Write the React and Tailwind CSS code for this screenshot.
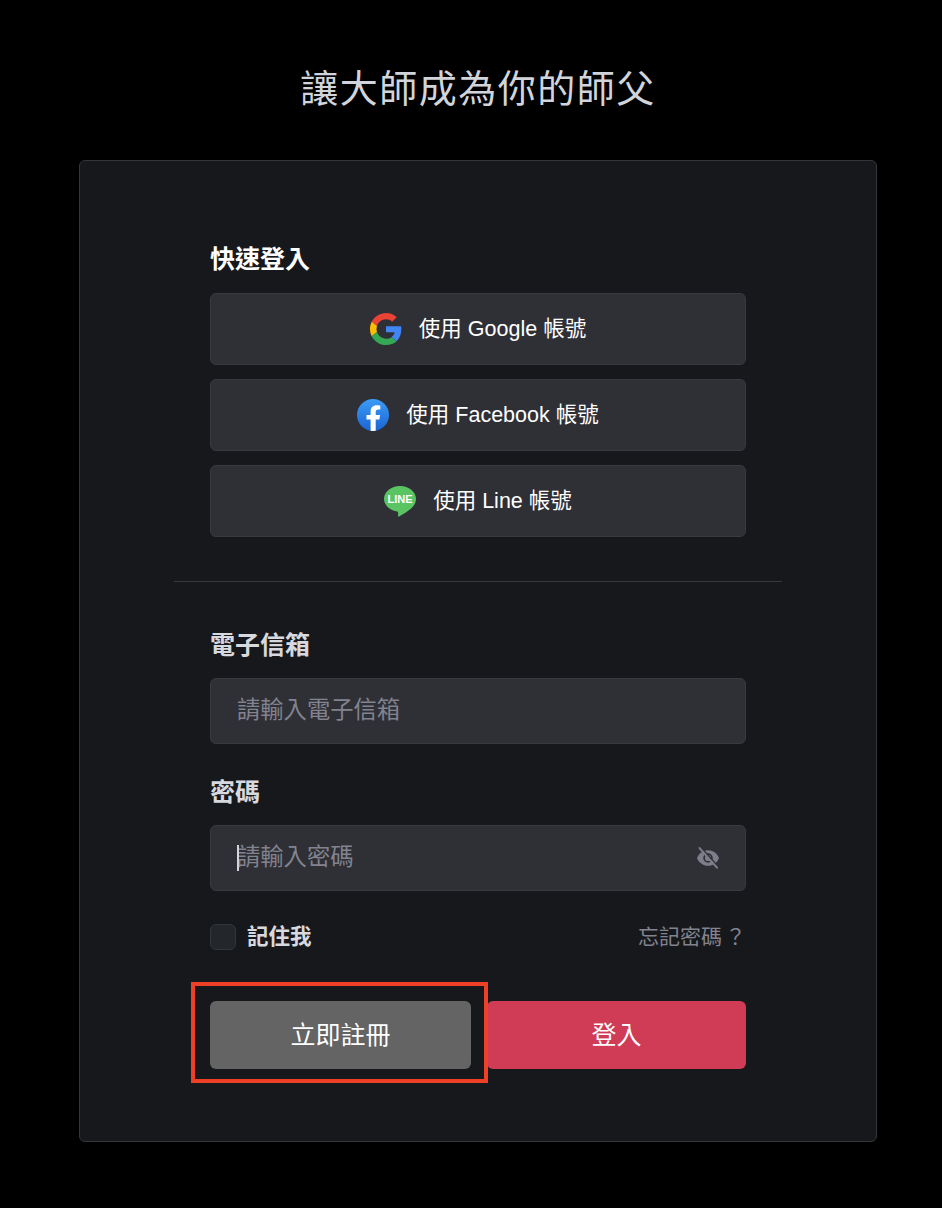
import React from 'react';

const GoogleIcon = () => (
  <svg viewBox="0 0 48 48" className="w-[32px] h-[32px] shrink-0">
    <path fill="#EA4335" d="M24 9.500c3.540 0 6.710 1.220 9.210 3.600l6.850-6.850C35.900 2.380 30.470 0 24 0 14.620 0 6.510 5.380 2.560 13.220l7.980 6.190C12.430 13.720 17.740 9.500 24 9.500z" />
    <path fill="#4285F4" d="M46.980 24.550c0-1.570-.15-3.090-.38-4.550H24v9.020h12.940c-.58 2.960-2.260 5.480-4.780 7.180l7.730 6c4.510-4.180 7.090-10.360 7.090-17.650z" />
    <path fill="#FBBC05" d="M10.530 28.590c-.48-1.450-.76-2.990-.76-4.590s.27-3.140.76-4.590l-7.980-6.190C.92 16.460 0 20.120 0 24c0 3.880.92 7.540 2.560 10.780l7.970-6.190z" />
    <path fill="#34A853" d="M24 48c6.480 0 11.930-2.130 15.890-5.810l-7.730-6c-2.150 1.450-4.920 2.300-8.160 2.300-6.260 0-11.570-4.220-13.470-9.910l-7.980 6.190C6.510 42.620 14.620 48 24 48z" />
  </svg>
);

const FacebookIcon = () => (
  <svg viewBox="0 0 32 32" className="w-[32px] h-[32px] shrink-0">
    <defs>
      <linearGradient id="fbGrad" x1="0" y1="0" x2="0" y2="1">
        <stop offset="0" stopColor="#3b9cf5" />
        <stop offset="1" stopColor="#1c64d4" />
      </linearGradient>
      <clipPath id="fbClip">
        <circle cx="16" cy="16" r="16" />
      </clipPath>
    </defs>
    <circle cx="16" cy="16" r="16" fill="url(#fbGrad)" />
    <path clipPath="url(#fbClip)" fill="#fff" d="M13.600 32V20.600H9.500V16h4.100v-3.500c0-4 2.400-6.300 6.100-6.300 1.800 0 3.600.3 3.600.3v3.900h-2c-2 0-2.600 1.200-2.600 2.500v3.100h4.400l-.7 4.600h-3.700V32z" />
  </svg>
);

const LineIcon = () => (
  <svg viewBox="0 0 32 32" className="w-[32px] h-[32px] shrink-0">
    <path fill="#5ac463" d="M16 1C7.200 1 0 6.700 0 13.800c0 6.300 5.600 11.600 13.300 12.600.7.2.9 1 .9 1.700l-.2 3c0 .6.5.8 1 .5 3.500-2 9.500-5.600 12.600-8.600C30.400 20.400 32 17.300 32 13.800 32 6.700 24.800 1 16 1z" />
    <text x="16" y="18.200" textAnchor="middle" fill="#fff" fontSize="11" fontWeight="700" fontFamily="Liberation Sans, sans-serif">LINE</text>
  </svg>
);

const EyeOffIcon = () => (
  <svg viewBox="0 0 24 24" className="w-[22px] h-[22px]">
    <path fill="#7d7e8a" d="M12 3.500C6.500 3.500 1.800 7 0 12c1.800 5 6.500 8.500 12 8.500S22.200 17 24 12C22.200 7 17.500 3.500 12 3.500z" />
    <circle cx="12" cy="12" r="4.300" fill="none" stroke="#2f3036" strokeWidth="1.800" />
    <path stroke="#2f3036" strokeWidth="1.800" d="M4.200 0.500l19 21" />
    <path stroke="#7d7e8a" strokeWidth="2.200" strokeLinecap="round" d="M2.800 1.200l19 21.300" />
  </svg>
);

const SocialButton = ({ icon, label }) => (
  <button className="h-[72px] w-full flex items-center justify-center gap-[17px] rounded-md bg-[#2f3036] border border-[#393a40] text-white text-[21.500px]">
    {icon}
    <span>{label}</span>
  </button>
);

const App = () => {
  return (
    <div className="min-h-[1208px] bg-black pl-[14px] flex flex-col items-center font-['Liberation_Sans','Noto_Sans_CJK_TC',sans-serif]">
      <h1 className="mt-[65px] h-[48px] leading-[48px] text-[38px] tracking-[1.500px] text-[#d1d5db] font-['Liberation_Serif','Noto_Sans_CJK_TC',serif] font-normal">
        讓大師成為你的師父
      </h1>

      <div className="mt-[47px] w-[798px] h-[982px] rounded-md bg-[#17181b] border border-[#35363c]">
        {/* Quick login */}
        <div className="px-[130px] pt-[80px]">
          <h2 className="h-[36px] leading-[36px] text-[25px] font-bold text-white">快速登入</h2>
          <div className="mt-[16px] flex flex-col gap-[14px]">
            <SocialButton icon={<GoogleIcon />} label="使用 Google 帳號" />
            <SocialButton icon={<FacebookIcon />} label="使用 Facebook 帳號" />
            <SocialButton icon={<LineIcon />} label="使用 Line 帳號" />
          </div>
        </div>

        <div className="mx-[94px] mt-[44px] h-px bg-[#37383e]" />

        {/* Form */}
        <div className="px-[130px] pt-[45px]">
          <label className="block h-[36px] leading-[36px] text-[25px] font-bold text-[#d8d9de]">電子信箱</label>
          <input
            placeholder="請輸入電子信箱"
            className="mt-[15px] block w-full h-[66px] pl-[26px] pr-[26px] pb-[2px] rounded-md bg-[#2f3036] border border-[#393a40] text-[23.300px] outline-none placeholder:text-[#82838f]"
          />

          <label className="mt-[30px] block h-[36px] leading-[36px] text-[25px] font-bold text-[#d8d9de]">密碼</label>
          <div className="relative mt-[15px]">
            <input
              placeholder="請輸入密碼"
              className="block w-full h-[66px] pl-[26px] pr-[26px] pb-[2px] rounded-md bg-[#2f3036] border border-[#393a40] text-[23.300px] outline-none placeholder:text-[#82838f]"
            />
            <span className="absolute left-[27px] top-[20px] w-[2px] h-[26px] bg-[#d1d5db]" />
            <span className="absolute right-[27px] top-[22px]">
              <EyeOffIcon />
            </span>
          </div>

          <div className="mt-[30px] flex items-center justify-between">
            <label className="flex items-center gap-[11px]">
              <span className="w-[26px] h-[26px] rounded-md bg-[#23262b] border border-[#33363c]" />
              <span className="text-[21.500px] font-bold text-[#d8d9de]">記住我</span>
            </label>
            <a className="text-[21px] text-[#82838f]">忘記密碼<span className="pl-[3px]">？</span></a>
          </div>

          <div className="mt-[48px] grid grid-cols-[261px_1fr] gap-[16px]">
            <div className="relative">
              <button className="w-full h-[68px] rounded-md bg-[#646464] text-white text-[25px]">立即註冊</button>
              {/* annotation box */}
              <span className="absolute -left-[19px] -right-[17px] -top-[19px] -bottom-[14px] border-4 border-[#ee4027] pointer-events-none" />
            </div>
            <button className="w-full h-[68px] rounded-md bg-[#d03b55] text-white text-[25px]">登入</button>
          </div>
        </div>
      </div>
    </div>
  );
};

export default App;
